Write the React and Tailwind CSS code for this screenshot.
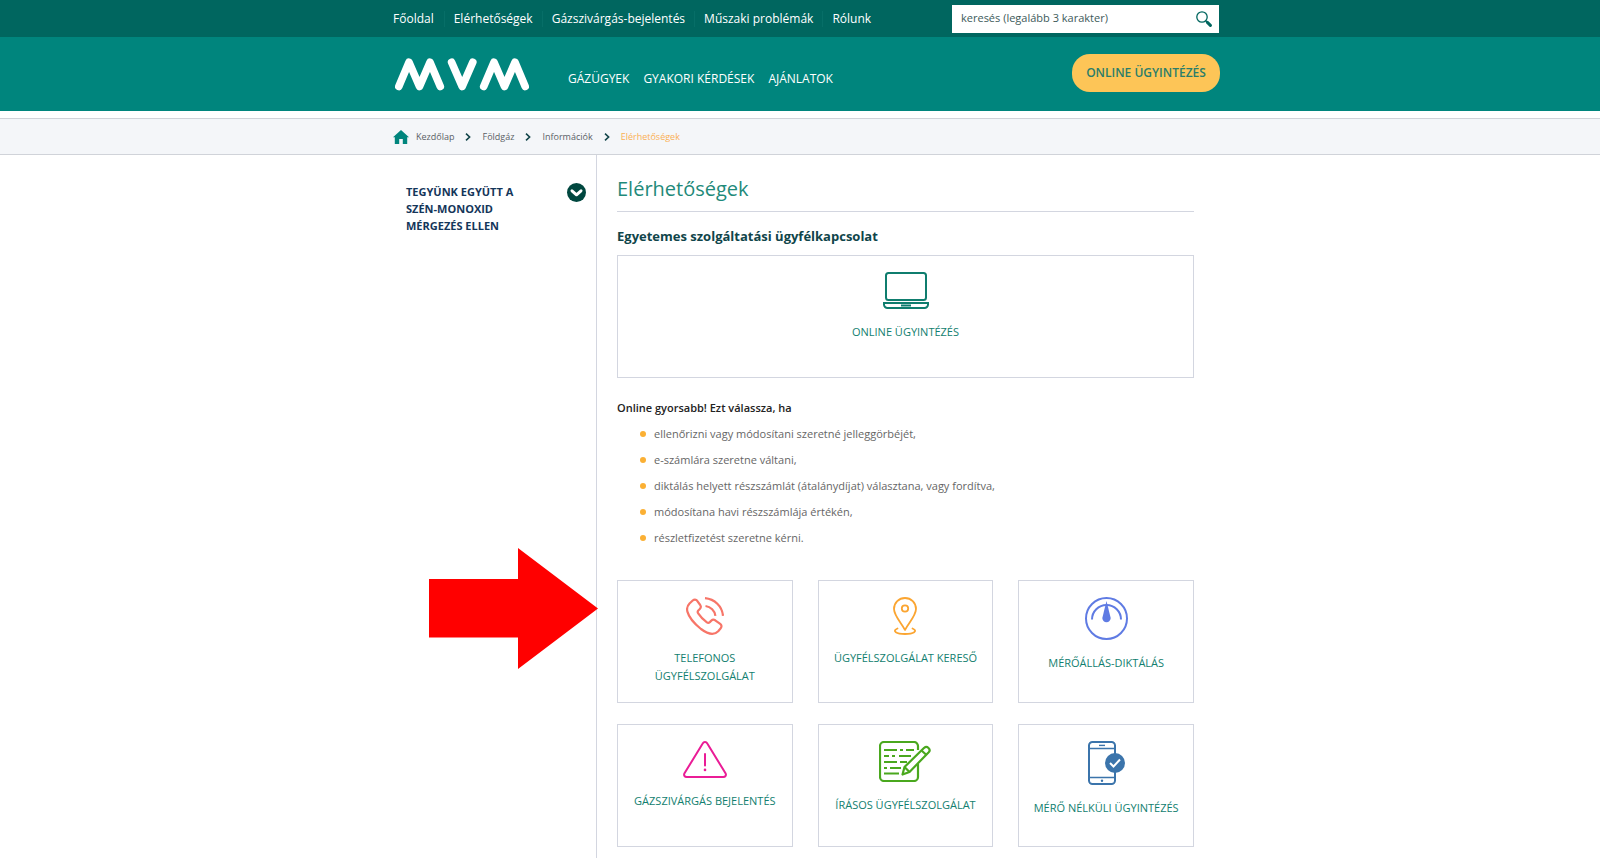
import React, { useState } from "react";

const TOP_LINKS = [
	"Főoldal",
	"Elérhetőségek",
	"Gázszivárgás-bejelentés",
	"Műszaki problémák",
	"Rólunk",
];

const MAIN_LINKS = ["GÁZÜGYEK", "GYAKORI KÉRDÉSEK", "AJÁNLATOK"];

const CRUMBS = ["Kezdőlap", "Földgáz", "Információk"];

const REASONS = [
	"ellenőrizni vagy módosítani szeretné jelleggörbéjét,",
	"e-számlára szeretne váltani,",
	"diktálás helyett részszámlát (átalánydíjat) választana, vagy fordítva,",
	"módosítana havi részszámlája értékén,",
	"részletfizetést szeretne kérni.",
];

const Logo = () => (
	<svg
		width="134"
		height="33"
		viewBox="0 0 134 33"
		fill="none"
		stroke="#fff"
		strokeWidth="7.600"
		strokeLinecap="round"
		strokeLinejoin="round"
		aria-hidden="true"
	>
		<path d="M3.800 28.500 14 4.200l10.500 24.300L35 4.200l10.300 24.300" />
		<path d="M56.600 4.200l10.600 24.300L77.800 4.200" />
		<path d="M88.700 28.500 99 4.200l10.500 24.300L120 4.200l10.200 24.300" />
	</svg>
);

const SearchIcon = () => (
	<svg width="16" height="16" viewBox="0 0 16 16" fill="none" stroke="#00665f">
		<circle cx="6" cy="6" r="5.200" strokeWidth="1.300" />
		<path d="M9.500 9.500l2 2" strokeWidth="1.400" />
		<path d="M11.400 11.400l3 3" strokeWidth="3" strokeLinecap="round" />
	</svg>
);

const HomeIcon = () => (
	<svg width="16" height="14" viewBox="0 0 16 14" fill="#00857d">
		<path d="M8 0l8 7.200h-1.800V14H9.800V9H6.200v5H1.800V7.200H0z" />
	</svg>
);

const Chevron = () => (
	<svg
		width="6"
		height="8"
		viewBox="0 0 6 8"
		fill="none"
		stroke="#12454a"
		strokeWidth="1.600"
		aria-hidden="true"
	>
		<path d="M1 .7l3.600 3.300L1 7.300" />
	</svg>
);

const LaptopIcon = () => (
	<svg width="46" height="37" viewBox="0 0 46 37" fill="none" stroke="#0f7d6e" strokeWidth="2">
		<rect x="3" y="1" width="40" height="27" rx="2.500" />
		<path d="M1 31h44v1.500a3.500 3.500 0 0 1-3.500 3.500h-37A3.500 3.500 0 0 1 1 32.500z" />
		<path d="M18 33.500h10" />
	</svg>
);

const PhoneIcon = () => (
	<svg
		width="38"
		height="38"
		viewBox="0 0 38 38"
		fill="none"
		stroke="#f77568"
		strokeWidth="2.200"
		strokeLinejoin="round"
	>
		<path d="M3.500 6.500 6.700 3.500c1.500-1.300 3.300-1.200 4.500.3l3 4.200c1 1.500.8 2.800-.4 4l-1.500 1.500c-.8.9-.8 1.900-.1 2.900 2.200 3.400 5.300 6.500 8.700 8.900 1 .7 2 .6 2.900-.2l1.500-1.500c1.200-1.100 2.500-1.200 3.900-.3l5 3.600c1.500 1.200 1.700 2.900.5 4.300l-2.500 3c-3.600 3.700-9.800 3.300-17.200-2.200C8.200 26.500 3 20.500 1.400 14.600.6 11.500 1.300 8.800 3.500 6.500z" />
		<path d="M19 1.200c9.800.9 17.100 8.200 18 17.600M19.500 9c5.200.7 9.300 4.600 9.900 9.800" />
	</svg>
);

const PinIcon = () => (
	<svg
		width="24"
		height="38"
		viewBox="0 0 24 38"
		fill="none"
		stroke="#fba531"
		strokeWidth="1.800"
		strokeLinecap="round"
		strokeLinejoin="round"
	>
		<path d="M12 33C10 28 1 19 1 12a11 11 0 0 1 22 0c0 7-9 16-11 21z" />
		<circle cx="12" cy="11.500" r="3.200" />
		<path d="M4.500 31.500C-1.500 34 3.500 37 12 37s13.500-3 7.500-5.500" />
	</svg>
);

const GaugeIcon = () => (
	<svg width="43" height="43" viewBox="0 0 43 43" fill="none" stroke="#5f7be3" strokeWidth="2">
		<circle cx="21.500" cy="21.500" r="20.500" />
		<path d="M7 22.500a14.500 14.500 0 0 1 29 0" />
		<path d="M21.500 4l4.200 17a4.200 4.200 0 1 1-8.400 0z" fill="#5f7be3" stroke="none" />
	</svg>
);

const WarningIcon = () => (
	<svg
		width="44"
		height="37"
		viewBox="0 0 44 37"
		fill="none"
		stroke="#ea1c96"
		strokeWidth="2"
		strokeLinecap="round"
		strokeLinejoin="round"
	>
		<path d="M19.700 2.500c1.100-2 3.500-2 4.600 0L42.500 32.300c1.100 2-.1 3.700-2.300 3.700H3.800c-2.200 0-3.400-1.700-2.300-3.700z" />
		<path d="M22 13v11.500" />
		<path d="M22 28.800v.2" strokeWidth="2.600" />
	</svg>
);

const FormIcon = () => (
	<svg width="52" height="41" viewBox="0 0 52 41" fill="none" stroke="#4aa81e" strokeWidth="2.200">
		<path d="M39 9V5a4 4 0 0 0-4-4H5a4 4 0 0 0-4 4v31a4 4 0 0 0 4 4h30a4 4 0 0 0 4-4V23" />
		<path d="M5 9h13M21 9h3M27 9h8M5 15h5M13 15h3M20 15h12M5 21h13M21 21h7M5 27h3M11 27h11M5 32.500h15" />
		<path
			d="M23.500 33.500l2-7.500L45.200 6.800c1.500-1.200 3-1 4.300.2s1.300 3 .2 4.200L30.500 31z"
			strokeLinejoin="round"
			fill="#fff"
		/>
		<path d="M42.500 9.500l5 4.500M25.500 26l5 5" />
	</svg>
);

const MobileIcon = () => (
	<svg width="37" height="44" viewBox="0 0 37 44" fill="none" stroke="#3b74ab" strokeWidth="2">
		<rect x="1" y="1" width="26" height="42" rx="3.500" />
		<path d="M1 7.500h26M1 36.500h26" strokeWidth="1.600" />
		<path d="M11 4.400h6" strokeWidth="1.400" />
		<circle cx="14" cy="39.800" r="1.200" fill="#3b74ab" stroke="none" />
		<circle cx="27" cy="22" r="10" fill="#3b74ab" stroke="none" />
		<path d="M22 22l3.500 3.500 6.500-7" stroke="#fff" />
	</svg>
);

const CARDS = [
	{ title: "TELEFONOS ÜGYFÉLSZOLGÁLAT", icon: <PhoneIcon /> },
	{ title: "ÜGYFÉLSZOLGÁLAT KERESŐ", icon: <PinIcon /> },
	{ title: "MÉRŐÁLLÁS-DIKTÁLÁS", icon: <GaugeIcon /> },
	{ title: "GÁZSZIVÁRGÁS BEJELENTÉS", icon: <WarningIcon /> },
	{ title: "ÍRÁSOS ÜGYFÉLSZOLGÁLAT", icon: <FormIcon /> },
	{ title: "MÉRŐ NÉLKÜLI ÜGYINTÉZÉS", icon: <MobileIcon /> },
];

const Card = ({ title, icon }) => (
	<a
		href="#"
		className="flex h-[123px] flex-col items-center gap-3.5 border border-[#d3d6e0] px-3 pt-4 text-center text-[11px] leading-[18px] font-medium text-[#12806f]"
	>
		{icon}
		<span>{title}</span>
	</a>
);

export default function App() {
	const [query, setQuery] = useState("");

	return (
		<div className="flex min-h-screen flex-col bg-white font-['Open_Sans',sans-serif]">
			{/* Top bar */}
			<div className="bg-[#00665f]">
				<div className="mx-auto flex h-[37px] max-w-[840px] items-center justify-between pl-[13px]">
					<nav className="flex text-xs text-white">
						{TOP_LINKS.map((link, i) => (
							<a
								key={link}
								href="#"
								className={i ? "border-l border-[#076e67] px-[9px]" : "pr-2.5"}
							>
								{link}
							</a>
						))}
					</nav>
					<form className="mr-px flex h-7 w-[267px] items-center bg-white pr-[7px]">
						<input
							type="text"
							aria-label="Keresés"
							placeholder="keresés (legalább 3 karakter)"
							value={query}
							onChange={(e) => setQuery(e.target.value)}
							className="min-w-0 flex-1 px-[9px] text-[11px] text-[#3d5a5a] outline-none placeholder:text-[#3d5a5a]"
						/>
						<button type="button" aria-label="Keresés indítása">
							<SearchIcon />
						</button>
					</form>
				</div>
			</div>

			{/* Main header */}
			<header className="bg-[#00857d]">
				<div className="mx-auto flex h-[74px] max-w-[840px] items-start pl-[15px]">
					<a href="#" aria-label="MVM" className="mt-[21px]">
						<Logo />
					</a>
					<nav className="mt-[33px] ml-[39px] flex gap-3.5 text-xs leading-[18px] text-white">
						{MAIN_LINKS.map((link) => (
							<a key={link} href="#">
								{link}
							</a>
						))}
					</nav>
					<button
						type="button"
						className="mt-[17px] ml-auto h-[38px] w-[148px] rounded-[18px] bg-[#fdc557] text-xs font-semibold text-[#2b7d6a]"
					>
						ONLINE ÜGYINTÉZÉS
					</button>
				</div>
			</header>

			{/* Breadcrumbs */}
			<div className="mt-[7px] border-y border-[#d0d3d9] bg-[#f4f6f9]">
				<nav className="mx-auto flex h-[35px] max-w-[840px] items-center gap-[11px] pl-[13px] text-[9px] text-[#5a5f66]">
					<a href="#" className="flex items-center gap-[7px]">
						<HomeIcon />
						{CRUMBS[0]}
					</a>
					<Chevron />
					<a href="#">{CRUMBS[1]}</a>
					<Chevron />
					<a href="#">{CRUMBS[2]}</a>
					<Chevron />
					<span className="text-[#fbb054]">Elérhetőségek</span>
				</nav>
			</div>

			<div className="mx-auto flex w-full max-w-[840px] flex-1">
				{/* Side menu */}
				<aside className="relative w-[216px] shrink-0 pt-7 pr-2.5 pl-[26px]">
					<a href="#" className="flex items-start justify-between">
						<span className="w-[120px] text-[11px] leading-[17px] font-bold text-[#14365a]">
							TEGYÜNK EGYÜTT A SZÉN-MONOXID MÉRGEZÉS ELLEN
						</span>
						<svg width="19" height="19" viewBox="0 0 19 19" fill="none">
							<circle cx="9.500" cy="9.500" r="9.500" fill="#00473f" />
							<path
								d="M5 7.800l4.500 4 4.500-4"
								stroke="#fff"
								strokeWidth="3"
								strokeLinecap="round"
								strokeLinejoin="round"
							/>
						</svg>
					</a>
					{/* Arrow pointing at the phone support card */}
					<svg
						width="169"
						height="121"
						viewBox="0 0 169 121"
						fill="#f00"
						className="absolute top-[393px] left-[49px] z-10"
					>
						<path d="M0 31h89V0l80 60.500L89 121V89.500H0z" />
					</svg>
				</aside>

				<main className="min-w-0 flex-1 border-l border-[#d3d6e0] pt-5 pr-[26px] pb-2.5 pl-5">
					<h1 className="border-b border-[#d3d6e0] pb-2 text-xl leading-7 font-normal text-[#1f8a7a]">
						Elérhetőségek
					</h1>
					<h2 className="pt-3.5 text-[13px] leading-5 font-bold text-[#10454a]">
						Egyetemes szolgáltatási ügyfélkapcsolat
					</h2>
					<a
						href="#"
						className="mt-[9px] flex h-[123px] flex-col items-center gap-3.5 border border-[#d3d6e0] pt-4 text-[11px] leading-[18px] font-medium text-[#12806f]"
					>
						<LaptopIcon />
						<span>ONLINE ÜGYINTÉZÉS</span>
					</a>

					<p className="mt-[21px] text-[11px] leading-[18px] font-semibold text-[#222]">
						Online gyorsabb! Ezt válassza, ha
					</p>
					<ul className="mt-1 text-[11px] leading-[26px] text-[#666]">
						{REASONS.map((reason) => (
							<li key={reason} className="flex items-center gap-2 pl-[23px]">
								<span className="size-1.5 rounded-full bg-[#fbb034]" />
								{reason}
							</li>
						))}
					</ul>

					<div className="mt-[29px] grid grid-cols-3 gap-x-[25px] gap-y-[21px]">
						{CARDS.map((card) => (
							<Card key={card.title} title={card.title} icon={card.icon} />
						))}
					</div>
				</main>
			</div>
		</div>
	);
}
